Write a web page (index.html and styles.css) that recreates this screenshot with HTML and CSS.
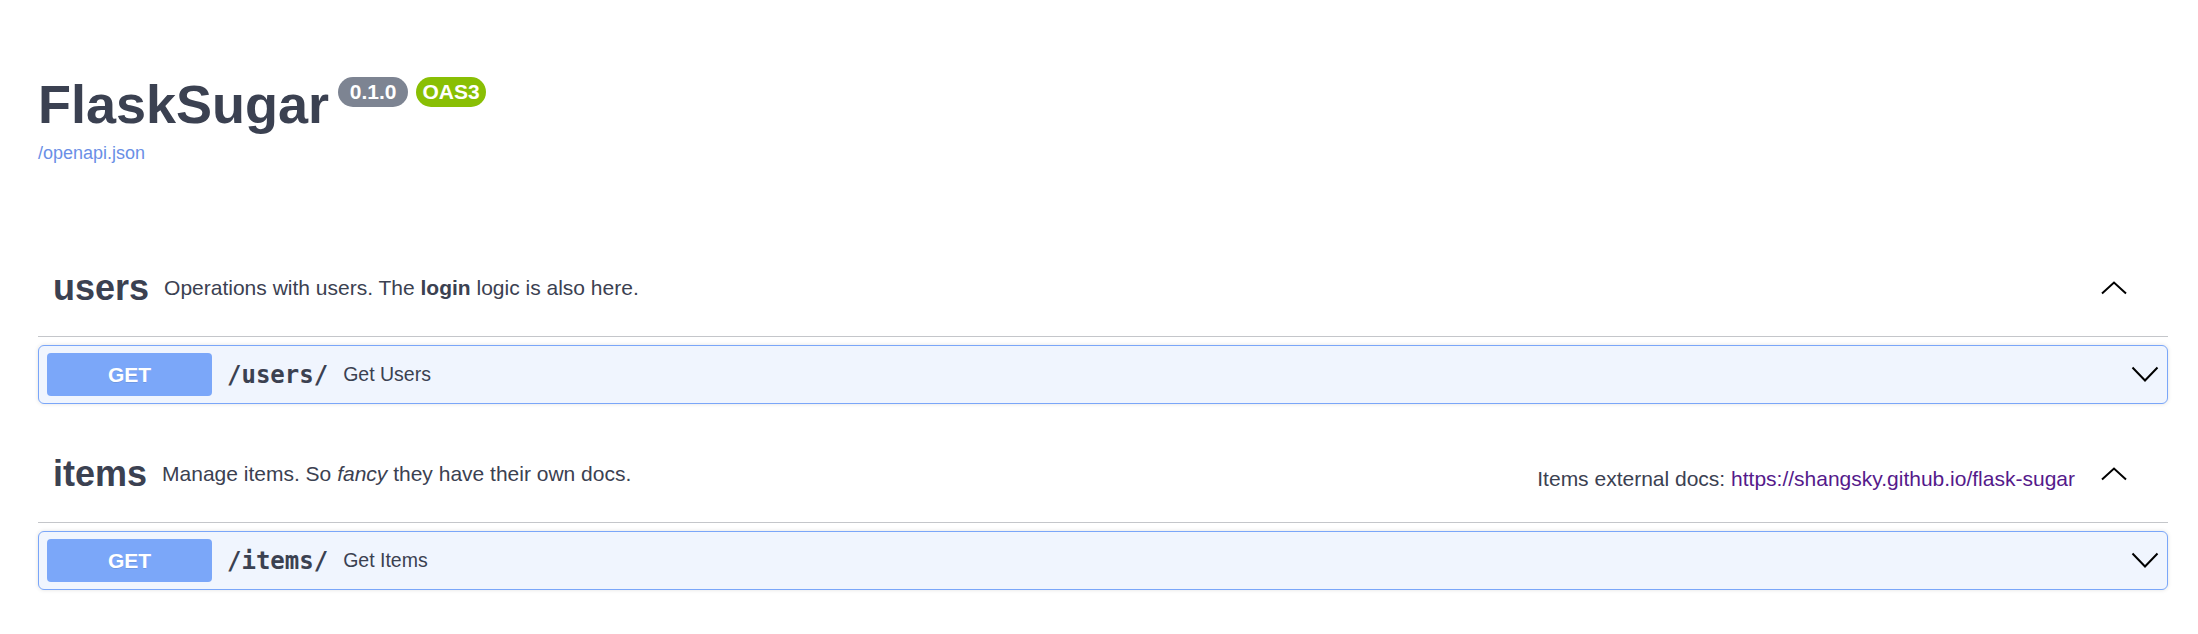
FILE: index.html
```html
<!DOCTYPE html>
<html lang="en">
<head>
<meta charset="utf-8">
<title>FlaskSugar</title>
<link rel="stylesheet" href="styles.css">
</head>
<body>
<div class="wrapper">
  <section class="info">
    <div class="title-row">
      <h2 class="title">FlaskSugar</h2>
      <span class="badge badge-version">0.1.0</span>
      <span class="badge badge-oas">OAS3</span>
    </div>
    <a class="spec-link" href="#">/openapi.json</a>
  </section>

  <section class="tag-section">
    <h3 class="opblock-tag">
      <span class="tag-name">users</span>
      <small class="tag-desc"><p>Operations with users. The <strong>login</strong> logic is also here.</p></small>
      <button class="expand" type="button" aria-label="collapse">
        <svg width="26" height="14" viewBox="0 0 26 14"><polyline points="1,12.5 13,1.5 25,12.5" fill="none" stroke="#000" stroke-width="2"/></svg>
      </button>
    </h3>
    <div class="opblock">
      <div class="opblock-summary">
        <span class="method">GET</span>
        <span class="path">/users/</span>
        <span class="summary-desc">Get Users</span>
        <svg class="arrow-down" width="28" height="17" viewBox="0 0 28 17"><polyline points="1.5,1.5 14,14.5 26.5,1.5" fill="none" stroke="#000" stroke-width="2"/></svg>
      </div>
    </div>
  </section>

  <section class="tag-section">
    <h3 class="opblock-tag">
      <span class="tag-name">items</span>
      <small class="tag-desc"><p>Manage items. So <em>fancy</em> they have their own docs.</p></small>
      <div class="ext-docs"><small>Items external docs: <a class="ext-link" href="#">https://shangsky.github.io/flask-sugar</a></small></div>
      <button class="expand" type="button" aria-label="collapse">
        <svg width="26" height="14" viewBox="0 0 26 14"><polyline points="1,12.5 13,1.5 25,12.5" fill="none" stroke="#000" stroke-width="2"/></svg>
      </button>
    </h3>
    <div class="opblock">
      <div class="opblock-summary">
        <span class="method">GET</span>
        <span class="path">/items/</span>
        <span class="summary-desc">Get Items</span>
        <svg class="arrow-down" width="28" height="17" viewBox="0 0 28 17"><polyline points="1.5,1.5 14,14.5 26.5,1.5" fill="none" stroke="#000" stroke-width="2"/></svg>
      </div>
    </div>
  </section>
</div>
</body>
</html>
```

FILE: styles.css
```css
html, body {
  margin: 0;
  padding: 0;
  background: #fff;
}

body {
  font-family: "Liberation Sans", Arial, sans-serif;
  color: #3b4151;
}

.wrapper {
  padding: 0 30px 0 38px;
}

.info {
  padding-top: 73px;
  margin-bottom: 76px;
}

.title-row {
  display: flex;
  align-items: flex-start;
}

.title {
  margin: 0;
  font-size: 54px;
  font-weight: 700;
  color: #3b4151;
  line-height: 62px;
}

.badge {
  display: inline-block;
  box-sizing: border-box;
  min-width: 70px;
  height: 30px;
  line-height: 30px;
  margin-top: 4px;
  padding: 0 6px;
  border-radius: 57px;
  color: #fff;
  font-size: 21px;
  font-weight: 700;
  text-align: center;
}

.badge-version {
  background: #7d8492;
  margin-left: 9px;
}

.badge-oas {
  background: #89bf04;
  margin-left: 8px;
}

.spec-link {
  display: block;
  margin-top: 8px;
  font-size: 18px;
  color: #6a8fe6;
  text-decoration: none;
}

.tag-section {
  display: flex;
  flex-direction: column;
}

.opblock-tag {
  display: flex;
  align-items: center;
  margin: 0 0 8px;
  padding: 15px 30px 15px 15px;
  border-bottom: 1px solid rgba(59, 65, 81, 0.3);
  font-size: 36px;
  font-weight: 700;
  color: #3b4151;
}

.tag-name {
  font-size: 36px;
}

.tag-desc {
  flex: 2;
  padding: 0 15px;
  font-size: 21px;
  font-weight: 400;
  color: #3b4151;
}

.tag-desc p {
  margin: 21px 0;
}

.tag-desc strong {
  font-weight: 700;
}

.ext-docs small {
  font-size: 21px;
  font-weight: 400;
  color: #3b4151;
}

.ext-link {
  color: #551a8b;
  text-decoration: none;
}

.expand {
  display: flex;
  align-items: center;
  background: none;
  border: none;
  padding: 0 11px 0 26px;
  margin: 0;
  cursor: pointer;
}

.opblock {
  margin: 0 0 22px;
  border: 1px solid #7aa6f9;
  border-radius: 6px;
  background: #f0f5fe;
  box-shadow: 0 0 4px rgba(0, 0, 0, 0.12);
}

.opblock-summary {
  display: flex;
  align-items: center;
  padding: 7px 8px;
}

.method {
  display: block;
  width: 165px;
  height: 43px;
  line-height: 43px;
  border-radius: 4px;
  background: #7ba7f9;
  color: #fff;
  font-size: 21px;
  font-weight: 700;
  text-align: center;
  text-shadow: 0 1px 0 rgba(0, 0, 0, 0.1);
}

.path {
  padding: 0 15px;
  font-family: "DejaVu Sans Mono", monospace;
  font-size: 24px;
  font-weight: 700;
  color: #3b4151;
}

.summary-desc {
  flex: 1;
  font-size: 19.5px;
  color: #3b4151;
}

.arrow-down {
  display: block;
}
```
